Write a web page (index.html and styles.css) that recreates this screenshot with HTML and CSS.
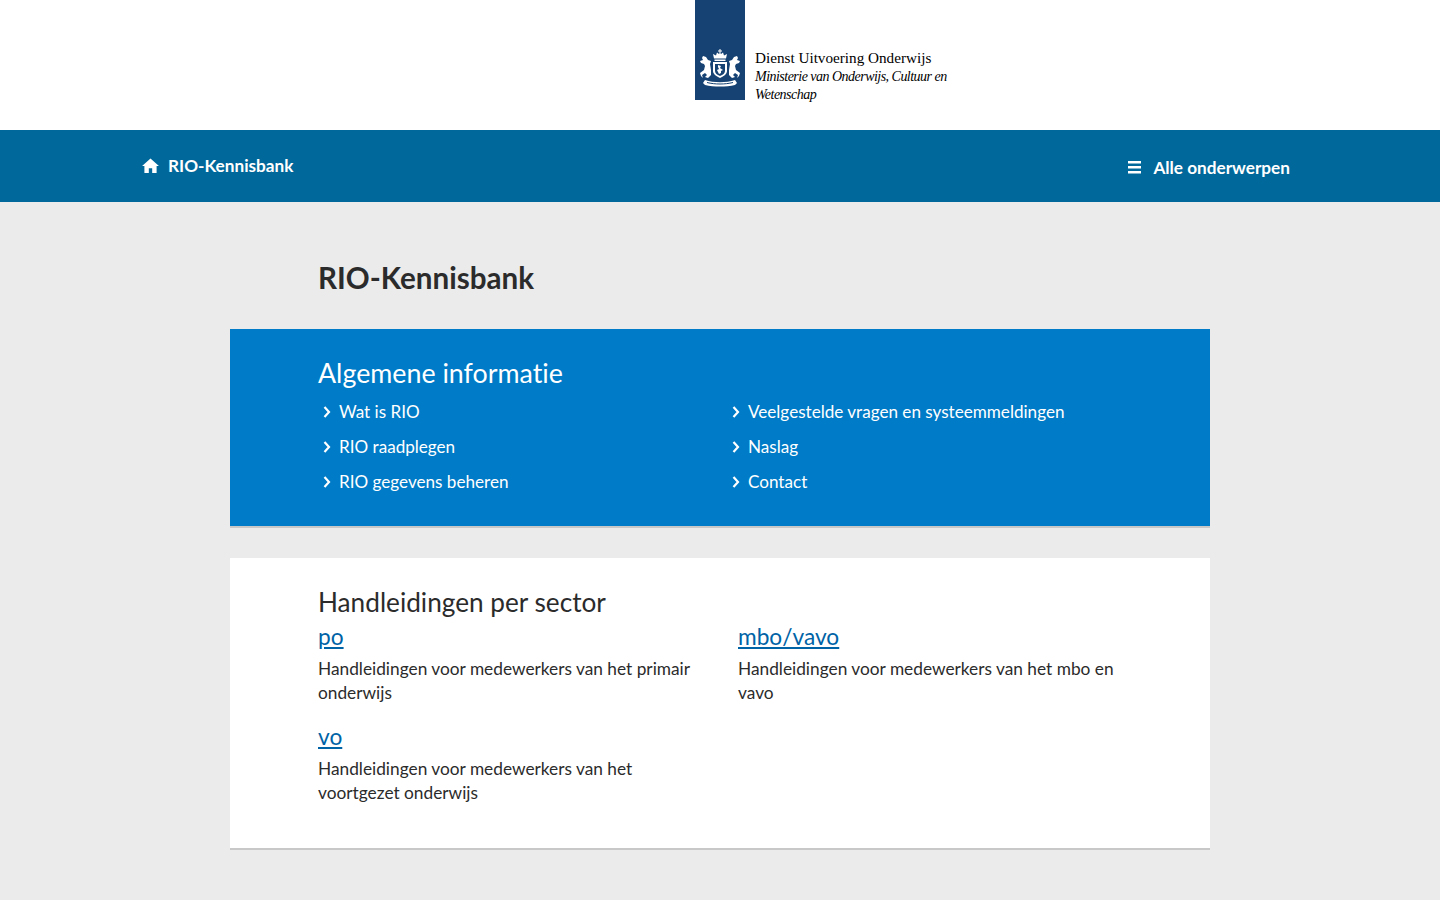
FILE: index.html
```html
<!DOCTYPE html>
<html lang="nl">
<head>
  <meta charset="UTF-8">
  <meta name="viewport" content="width=device-width, initial-scale=1.0">
  <title>RIO-Kennisbank</title>
  <link rel="stylesheet" href="styles.css">
</head>
<body>
  <header class="top">
    <div class="logo">
      <div class="logo-mark">
        <svg width="50" height="100" viewBox="0 0 50 100">
          <g fill="#fff">
            <path d="M24.500 49h1v1.500H27v1h-1.500V53h-1v-1.500H23v-1h1.500z"/>
            <path d="M19 58.500l-1-4.500 3 1.500 1-3 2 1.500 1-1.500 1 1.500 2-1.500 1 3 3-1.500-1 4.500z"/>
            <path d="M19.500 59.500h11V61h-11z"/>
            <path d="M18 62h14v9c0 3-3 5-7 7-4-2-7-4-7-7z"/>
            <path d="M16 70l-1-6 1-3-3-1-2-3-3-1-1 2 1 2-3 1 1 2 3 1 1 2-1 4-4 3 1 3 2 2-1-3 3-2 2 2-2 2 3 1 3-3z"/>
            <path d="M34 70l1-6-1-3 3-1 2-3 3-1 1 2-1 2 3 1-1 2-3 1-1 2 1 4 4 3-1 3-2 2 1-3-3-2-2 2 2 2-3 1-3-3z"/>
            <path d="M10 80c9 3 21 3 30 0l2 3-2 2c-9 2-21 2-30 0l-2-2z"/>
          </g>
          <path d="M20 64h10v7c0 2-2 4-5 5-3-1-5-3-5-5z" fill="#154273"/>
          <path d="M23 65l3 1-1 2 3 2-2 1v2l-2 1-1-2-1-2 2-1-1-2z" fill="#fff"/>
          <path d="M12 82.500c8 2 18 2 26 0" fill="none" stroke="#154273" stroke-width="1"/>
        </svg>
      </div>
      <div class="logo-text">
        <div class="logo-name">Dienst Uitvoering Onderwijs</div>
        <div class="logo-sub">Ministerie van Onderwijs, Cultuur en Wetenschap</div>
      </div>
    </div>
  </header>

  <nav class="nav">
    <a class="nav-home" href="#">
      <svg class="nav-icon" width="17" height="15" viewBox="0 0 18 16">
        <path d="M9 .5L0 8.500h2.500V16h4.700v-5h3.600v5h4.700V8.500H18z" fill="#fff"/>
      </svg>
      RIO-Kennisbank
    </a>
    <a class="nav-menu" href="#">
      <svg class="nav-icon" width="13" height="13" viewBox="0 0 13 13">
        <path d="M0 0h13v2.500H0zM0 5h13v2.500H0zM0 10h13v2.500H0z" fill="#fff"/>
      </svg>
      Alle onderwerpen
    </a>
  </nav>

  <main class="content">
    <h1>RIO-Kennisbank</h1>

    <section class="block block-blue">
      <h2>Algemene informatie</h2>
      <div class="links">
        <a href="#"><svg class="chevron" width="8" height="12" viewBox="0 0 8 12"><path d="M1.500 1l4.500 5-4.500 5" fill="none" stroke="#fff" stroke-width="2.200"/></svg>Wat is RIO</a>
        <a href="#"><svg class="chevron" width="8" height="12" viewBox="0 0 8 12"><path d="M1.500 1l4.500 5-4.500 5" fill="none" stroke="#fff" stroke-width="2.200"/></svg>Veelgestelde vragen en systeemmeldingen</a>
        <a href="#"><svg class="chevron" width="8" height="12" viewBox="0 0 8 12"><path d="M1.500 1l4.500 5-4.500 5" fill="none" stroke="#fff" stroke-width="2.200"/></svg>RIO raadplegen</a>
        <a href="#"><svg class="chevron" width="8" height="12" viewBox="0 0 8 12"><path d="M1.500 1l4.500 5-4.500 5" fill="none" stroke="#fff" stroke-width="2.200"/></svg>Naslag</a>
        <a href="#"><svg class="chevron" width="8" height="12" viewBox="0 0 8 12"><path d="M1.500 1l4.500 5-4.500 5" fill="none" stroke="#fff" stroke-width="2.200"/></svg>RIO gegevens beheren</a>
        <a href="#"><svg class="chevron" width="8" height="12" viewBox="0 0 8 12"><path d="M1.500 1l4.500 5-4.500 5" fill="none" stroke="#fff" stroke-width="2.200"/></svg>Contact</a>
      </div>
    </section>

    <section class="block block-white">
      <h2 class="sector-title">Handleidingen per sector</h2>
      <div class="sectors">
        <div class="sector">
          <a href="#">po</a>
          <p>Handleidingen voor medewerkers van het primair onderwijs</p>
        </div>
        <div class="sector">
          <a href="#">mbo/vavo</a>
          <p>Handleidingen voor medewerkers van het mbo en vavo</p>
        </div>
        <div class="sector">
          <a href="#">vo</a>
          <p>Handleidingen voor medewerkers van het voortgezet onderwijs</p>
        </div>
      </div>
    </section>
  </main>
</body>
</html>
```

FILE: styles.css
```css
body {
  margin: 0;
  background-color: #ebebeb;
  font-family: Lato, Arial, sans-serif;
  font-variant-ligatures: none;
  color: #2b2b2b;
}
a {
  text-decoration: none;
}
.top {
  height: 130px;
  background: #fff;
}
.logo {
  display: flex;
  margin-left: 695px;
}
.logo-mark {
  width: 50px;
  height: 100px;
  background: #154273;
}
.logo-text {
  width: 200px;
  margin: 49px 0 0 10px;
  font-family: "Liberation Serif", serif;
  font-size: 15.200px;
  line-height: 18px;
  color: #000;
}
.logo-name {
  margin-bottom: 1px;
}
.logo-sub {
  font-style: italic;
  font-size: 14px;
  letter-spacing: -0.520px;
}
.nav {
  display: flex;
  justify-content: space-between;
  height: 72px;
  padding: 0 150px 0 142px;
  background: #01689b;
}
.nav a {
  display: flex;
  align-items: center;
  font-size: 17.200px;
  font-weight: 700;
  color: #fff;
}
.nav-home {
  margin-top: -2px;
  gap: 9px;
}
.nav-menu {
  margin-top: 3px;
  gap: 12px;
}
.content {
  width: 980px;
  margin: 0 auto;
}
h1 {
  margin: 0;
  padding: 56px 0 31px 88px;
  font-size: 29.600px;
  line-height: 40px;
  font-weight: 700;
}
h2 {
  margin: 0;
  font-size: 26.800px;
  line-height: 32px;
  font-weight: 400;
}
.block {
  padding-left: 88px;
  border-bottom: 2px solid #c8c8c8;
}
.block-blue {
  padding-top: 28px;
  height: 169px;
  background: #007bc7;
  color: #fff;
}
.links {
  display: grid;
  grid-template-columns: 409px 1fr;
  grid-auto-rows: 35px;
  margin-top: 5px;
}
.links a {
  display: flex;
  align-items: center;
  gap: 8px;
  padding-left: 5px;
  font-size: 17.100px;
  color: #fff;
}
.block-white {
  margin-top: 30px;
  height: 262px;
  padding-top: 28px;
  padding-right: 60px;
  background: #fff;
}
.sector-title {
  font-size: 26.200px;
}
.sectors {
  display: grid;
  grid-template-columns: 420px 1fr;
  row-gap: 16px;
  margin-top: 3px;
}
.sector {
  width: 385px;
}
.sector a {
  font-size: 22.700px;
  line-height: 32px;
  color: #0063a6;
  text-decoration: underline;
}
.sector p {
  margin: 4px 0 0;
  font-size: 17.300px;
  line-height: 24px;
}
```
